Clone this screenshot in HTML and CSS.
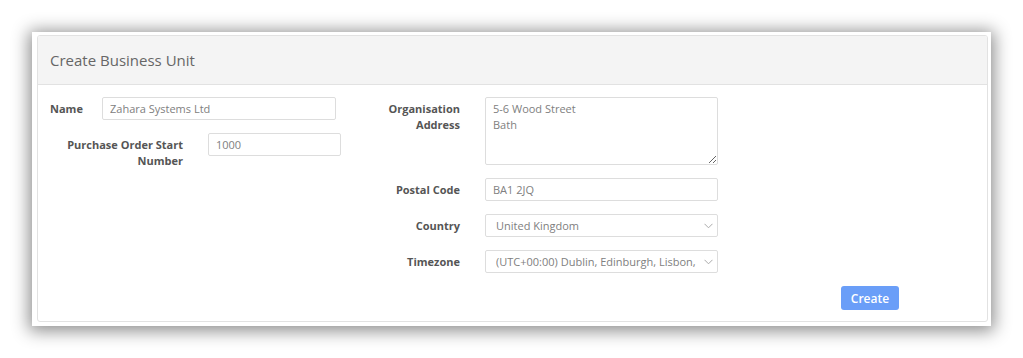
FILE: index.html
```html
<!DOCTYPE html>
<html lang="en">
<head>
    <meta charset="UTF-8">
    <meta name="viewport" content="width=device-width, initial-scale=1.0">
    <title>Create Business Unit</title>
    <link rel="stylesheet" href="styles.css">
</head>
<body>
    <div class="frame">
        <div class="panel">
            <div class="panel-heading">Create Business Unit</div>
            <div class="panel-body">
                <div class="col-left">
                    <div class="row row-name">
                        <label class="label">Name</label>
                        <input class="field field-name" type="text" value="Zahara Systems Ltd">
                    </div>
                    <div class="row row-po">
                        <label class="label">Purchase Order Start Number</label>
                        <input class="field field-po" type="text" value="1000">
                    </div>
                </div>
                <div class="col-right">
                    <div class="row">
                        <label class="label">Organisation Address</label>
                        <textarea class="field field-area">5-6 Wood Street
Bath</textarea>
                    </div>
                    <div class="row">
                        <label class="label">Postal Code</label>
                        <input class="field" type="text" value="BA1 2JQ">
                    </div>
                    <div class="row">
                        <label class="label">Country</label>
                        <div class="field select">
                            <span class="select-text">United Kingdom</span>
                            <svg class="chevron" width="9" height="6" viewBox="0 0 9 6"><path d="M0.5 0.8 L4.5 4.8 L8.5 0.8" fill="none" stroke="#aaa" stroke-width="1"/></svg>
                        </div>
                    </div>
                    <div class="row">
                        <label class="label">Timezone</label>
                        <div class="field select">
                            <span class="select-text">(UTC+00:00) Dublin, Edinburgh, Lisbon, London</span>
                            <svg class="chevron" width="9" height="6" viewBox="0 0 9 6"><path d="M0.5 0.8 L4.5 4.8 L8.5 0.8" fill="none" stroke="#aaa" stroke-width="1"/></svg>
                        </div>
                    </div>
                </div>
                <div class="actions">
                    <button class="btn" type="button">Create</button>
                </div>
            </div>
        </div>
    </div>
</body>
</html>
```

FILE: styles.css
```css
* {
    box-sizing: border-box;
}
html, body {
    height: 100%;
}
body {
    margin: 0;
    padding: 32px 0 0 32px;
    background: #fff;
    font-family: 'Open Sans', sans-serif;
    overflow: hidden;
}
.frame {
    width: 959px;
    height: 294px;
    background: #fff;
    padding: 3px 3px 4px 5px;
    box-shadow: 0 2px 16px 3px rgba(0, 0, 0, 0.45);
}
.panel {
    height: 100%;
    border: 1px solid #e2e2e2;
    border-radius: 3px;
    overflow: hidden;
}
.panel-heading {
    height: 49px;
    background: #f4f4f4;
    border-bottom: 1px solid #e2e2e2;
    padding: 0 12px;
    display: flex;
    align-items: center;
    font-size: 15px;
    color: #666;
}
.panel-body {
    display: grid;
    grid-template-columns: 330px 1fr;
    padding: 12px 0 0 12px;
}
.row {
    display: flex;
    align-items: flex-start;
    margin-bottom: 13px;
}
.label {
    font-size: 11px;
    font-weight: 700;
    color: #555;
    line-height: 16px;
    padding-top: 4px;
    text-align: right;
}
.row-name .label {
    width: 32px;
    text-align: left;
    margin-right: 20px;
}
.row-po .label {
    width: 133px;
    margin-right: 25px;
}
.col-right .label {
    width: 80px;
    margin-right: 25px;
}
.field {
    height: 23px;
    width: 233px;
    border: 1px solid #ddd;
    border-radius: 2px;
    padding: 0 7px;
    font-family: 'Open Sans', sans-serif;
    font-size: 11px;
    color: #808080;
    background: #fff;
    outline: none;
}
.field-name {
    width: 234px;
}
.field-po {
    width: 133px;
}
.field-area {
    height: 68px;
    padding: 3px 7px;
    line-height: 16px;
    resize: vertical;
}
.select {
    display: flex;
    align-items: center;
    justify-content: space-between;
    padding: 0 4px 0 10px;
}
.select-text {
    white-space: nowrap;
    overflow: hidden;
    width: 200px;
}
.chevron {
    flex: none;
}
.actions {
    grid-column: 1 / 3;
    display: flex;
    justify-content: flex-end;
    padding-right: 88px;
}
.btn {
    width: 58px;
    height: 24px;
    border: none;
    border-radius: 3px;
    background: #6a9ef8;
    color: #fff;
    font-family: 'Open Sans', sans-serif;
    font-size: 12px;
    font-weight: 600;
}
```
